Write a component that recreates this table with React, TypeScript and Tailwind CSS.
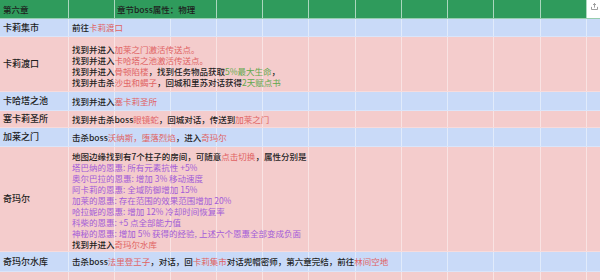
import React from "react";

type Seg = { t: string; c?: "r" | "g" | "p" };
type Line = Seg[];
type Row = { name: string; bg: "blue" | "pink"; h: string; lines: Line[] };

const cols = "grid-cols-[69px_46px_56px_46px_46px_46px_47px_46px_46px_46px_47px_46px_1fr]";

const rows: Row[] = [
  { name: "卡莉集市", bg: "blue", h: "h-[18px]", lines: [[{ t: "前往" }, { t: "卡莉渡口", c: "r" }]] },
  {
    name: "卡莉渡口",
    bg: "pink",
    h: "h-[55px]",
    lines: [
      [{ t: "找到并进入" }, { t: "加莱之门激活传送点。", c: "r" }],
      [{ t: "找到并进入" }, { t: "卡哈塔之池激活传送点。", c: "r" }],
      [{ t: "找到并进入" }, { t: "骨顿陷楼", c: "r" }, { t: "，找到任务物品获取" }, { t: "5%最大生命", c: "g" }, { t: "，" }],
      [{ t: "找到并击杀" }, { t: "沙虫和蝎子", c: "r" }, { t: "，回城和里苏对话获得" }, { t: "2天赋点书", c: "g" }],
    ],
  },
  { name: "卡哈塔之池", bg: "blue", h: "h-[19px]", lines: [[{ t: "找到并进入" }, { t: "塞卡莉圣所", c: "r" }]] },
  {
    name: "塞卡莉圣所",
    bg: "pink",
    h: "h-[17px]",
    lines: [[{ t: "找到并击杀boss" }, { t: "眼镜蛇", c: "r" }, { t: "，回城对话，传送到" }, { t: "加莱之门", c: "r" }]],
  },
  {
    name: "加莱之门",
    bg: "blue",
    h: "h-[19px]",
    lines: [[{ t: "击杀boss" }, { t: "沃纳斯，堕落烈焰", c: "r" }, { t: "，进入" }, { t: "奇玛尔", c: "r" }]],
  },
  {
    name: "奇玛尔",
    bg: "pink",
    h: "h-[105px]",
    lines: [
      [{ t: "地图边缘找到有7个柱子的房间，可随意" }, { t: "点击切换", c: "r" }, { t: "，属性分别是" }],
      [{ t: "塔巴纳的恩惠: 所有元素抗性 +5%", c: "p" }],
      [{ t: "奥尔巴拉的恩惠: 增加 3% 移动速度", c: "p" }],
      [{ t: "阿卡莉的恩惠: 全域防御增加 15%", c: "p" }],
      [{ t: "加莱的恩惠: 存在范围的效果范围增加 20%", c: "p" }],
      [{ t: "哈拉妮的恩惠: 增加 12% 冷却时间恢复率", c: "p" }],
      [{ t: "科柴的恩惠: +5 点全部能力值", c: "p" }],
      [{ t: "神秘的恩惠: 增加 5% 获得的经验, 上述六个恩惠全部变成负面", c: "p" }],
      [{ t: "找到并进入" }, { t: "奇玛尔水库", c: "r" }],
    ],
  },
  {
    name: "奇玛尔水库",
    bg: "blue",
    h: "h-[20px]",
    lines: [
      [
        { t: "击杀boss" },
        { t: "法里登王子", c: "r" },
        { t: "，对话，回" },
        { t: "卡莉集市", c: "r" },
        { t: "对话兜帽密师，第六章完结，前往" },
        { t: "林间空地", c: "r" },
      ],
    ],
  },
  { name: "", bg: "pink", h: "h-[20px]", lines: [] },
];

const startCls = [
  "col-start-2",
  "col-start-3",
  "col-start-4",
  "col-start-5",
  "col-start-6",
  "col-start-7",
  "col-start-8",
  "col-start-9",
  "col-start-10",
  "col-start-11",
  "col-start-12",
];

function segClass(c?: string) {
  if (c === "r") return "text-[#e06363]";
  if (c === "g") return "text-[#5fa84b]";
  if (c === "p") return "text-[#a35cd8]";
  return "font-medium";
}

export default function App() {
  return (
    <div
      className="h-[280px] w-[600px] overflow-hidden bg-[#f4cccc] text-[#1e1e1e]"
      style={{ fontFamily: '"Noto Sans CJK SC", "Noto Sans", sans-serif' }}
    >
      <div className={`grid h-[19px] ${cols} bg-[#2f9b5c] border-b border-white/50`}>
        <div className="col-start-1 row-start-1 flex items-center border-r border-white/60 pl-[3px] text-[8.5px] font-medium">
          第六章
        </div>
        <div className="col-start-2 row-start-1 border-r border-white/60" />
        <div className="col-start-3 col-end-5 row-start-1 flex items-center border-r border-white/60 pl-[2px] text-[8.5px] font-medium">
          章节boss属性：物理
        </div>
        {startCls.slice(3).map((s) => (
          <div key={s} className={`${s} row-start-1 border-r border-white/60`} />
        ))}
        <div className="col-start-13 row-start-1 flex items-start justify-end bg-white pr-[1px] pt-[2px]">
          <svg width="9" height="9" viewBox="0 0 24 24" fill="none" stroke="#8a8a8a" strokeWidth="2.2">
            <path d="M4 13v7h16v-7" />
            <path d="M12 15V4" />
            <path d="M8 8l4-4 4 4" />
          </svg>
        </div>
      </div>
      {rows.map((r, i) => (
        <div
          key={i}
          className={`grid ${cols} ${r.h} ${r.bg === "blue" ? "bg-[#c9daf8]" : "bg-[#f4cccc]"} border-b border-white/30`}
        >
          <div className="col-start-1 row-start-1 flex items-center border-r border-white/45 pl-[3px] text-[9px] font-medium whitespace-nowrap">
            {r.name}
          </div>
          {startCls.map((s) => (
            <div key={s} className={`${s} row-start-1 border-r border-white/45`} />
          ))}
          <div
            className={`col-start-2 col-end-[-1] row-start-1 z-10 flex flex-col justify-center pl-[3px] text-[8.5px] leading-[11px] whitespace-nowrap ${
              r.lines.length > 1 ? "pt-[3px]" : ""
            }`}
          >
            {r.lines.map((ln, j) => (
              <div key={j} className="h-[11px]">
                {ln.map((s, k) => (
                  <span key={k} className={segClass(s.c)}>
                    {s.t}
                  </span>
                ))}
              </div>
            ))}
          </div>
        </div>
      ))}
    </div>
  );
}
